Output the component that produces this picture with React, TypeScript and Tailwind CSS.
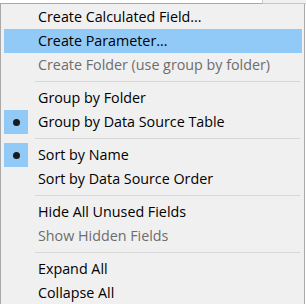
import React from "react";

type Item =
  | { kind: "sep" }
  | { kind: "item"; label: string; disabled?: boolean; checked?: boolean; active?: boolean };

const items: Item[] = [
  { kind: "item", label: "Create Calculated Field..." },
  { kind: "item", label: "Create Parameter...", active: true },
  { kind: "item", label: "Create Folder (use group by folder)", disabled: true },
  { kind: "sep" },
  { kind: "item", label: "Group by Folder" },
  { kind: "item", label: "Group by Data Source Table", checked: true },
  { kind: "sep" },
  { kind: "item", label: "Sort by Name", checked: true },
  { kind: "item", label: "Sort by Data Source Order" },
  { kind: "sep" },
  { kind: "item", label: "Hide All Unused Fields" },
  { kind: "item", label: "Show Hidden Fields", disabled: true },
  { kind: "sep" },
  { kind: "item", label: "Expand All" },
  { kind: "item", label: "Collapse All" },
];

export default function App() {
  return (
    <div className="relative h-[304px] w-[306px] overflow-hidden bg-white font-['Open_Sans','Noto_Sans',sans-serif]">
      <div className="absolute left-[262px] top-0 h-[4px] w-[44px] border-b border-l border-[#c8c8c8] bg-[#f0f0f0]" />
      <div className="mt-[3px] h-[320px] w-[305px] border-x border-t border-[#a9a9a9] bg-[#f0f0f0] pl-[3px] pr-[2px] pt-[1px]">
        {items.map((it, i) =>
          it.kind === "sep" ? (
            <div key={i} className="flex h-[9px] items-center pl-[31px] pr-[2px]">
              <div className="h-px w-full bg-[#d7d7d7]" />
            </div>
          ) : (
            <div
              key={i}
              className={
                "flex h-[24px] items-center text-[14.3px] " +
                (it.active ? "bg-[#91c9f7] " : "") +
                (it.disabled ? "text-[#6d6d6d]" : "text-black")
              }
            >
              <div className="flex h-[24px] w-[24px] items-center justify-center">
                {it.checked && (
                  <div className="flex h-[24px] w-[24px] items-center justify-center bg-[#91c9f7]">
                    <div className="h-[7px] w-[7px] rounded-full bg-[#1a1a1a]" />
                  </div>
                )}
              </div>
              <span className="pl-[10px] leading-none">{it.label}</span>
            </div>
          )
        )}
      </div>
    </div>
  );
}
